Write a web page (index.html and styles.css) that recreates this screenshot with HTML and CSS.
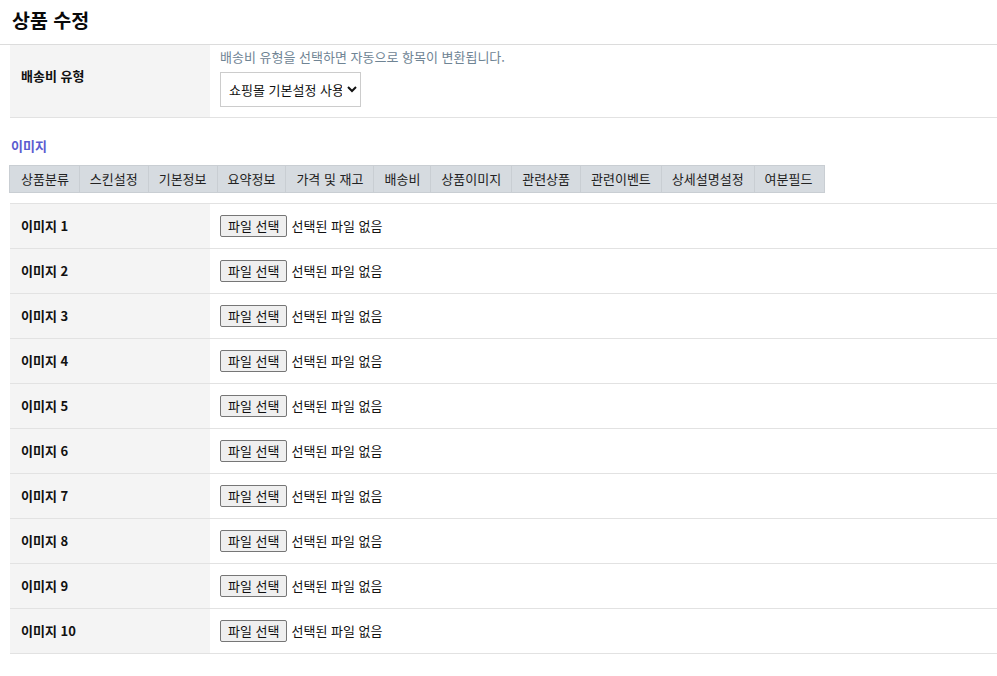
FILE: index.html
```html
<!DOCTYPE html>
<html lang="ko">
<head>
<meta charset="utf-8">
<title>상품 수정</title>
<link rel="stylesheet" href="styles.css">
</head>
<body>
<header class="page-header">
  <h1 class="page-title">상품 수정</h1>
</header>
<main class="content">
  <table class="form-table">
    <tr class="row-tall">
      <th class="label">배송비 유형</th>
      <td class="field">
        <p class="hint">배송비 유형을 선택하면 자동으로 항목이 변환됩니다.</p>
        <select class="select">
          <option>쇼핑몰 기본설정 사용</option>
        </select>
      </td>
    </tr>
  </table>

  <h2 class="section-title">이미지</h2>
  <nav class="tabs">
    <span class="tab">상품분류</span>
    <span class="tab">스킨설정</span>
    <span class="tab">기본정보</span>
    <span class="tab">요약정보</span>
    <span class="tab">가격 및 재고</span>
    <span class="tab">배송비</span>
    <span class="tab">상품이미지</span>
    <span class="tab">관련상품</span>
    <span class="tab">관련이벤트</span>
    <span class="tab">상세설명설정</span>
    <span class="tab">여분필드</span>
  </nav>

  <table class="form-table images">
    <tr><th class="label">이미지 1</th><td class="field"><span class="file"><button class="file-btn" type="button">파일 선택</button><span class="file-name">선택된 파일 없음</span></span></td></tr>
    <tr><th class="label">이미지 2</th><td class="field"><span class="file"><button class="file-btn" type="button">파일 선택</button><span class="file-name">선택된 파일 없음</span></span></td></tr>
    <tr><th class="label">이미지 3</th><td class="field"><span class="file"><button class="file-btn" type="button">파일 선택</button><span class="file-name">선택된 파일 없음</span></span></td></tr>
    <tr><th class="label">이미지 4</th><td class="field"><span class="file"><button class="file-btn" type="button">파일 선택</button><span class="file-name">선택된 파일 없음</span></span></td></tr>
    <tr><th class="label">이미지 5</th><td class="field"><span class="file"><button class="file-btn" type="button">파일 선택</button><span class="file-name">선택된 파일 없음</span></span></td></tr>
    <tr><th class="label">이미지 6</th><td class="field"><span class="file"><button class="file-btn" type="button">파일 선택</button><span class="file-name">선택된 파일 없음</span></span></td></tr>
    <tr><th class="label">이미지 7</th><td class="field"><span class="file"><button class="file-btn" type="button">파일 선택</button><span class="file-name">선택된 파일 없음</span></span></td></tr>
    <tr><th class="label">이미지 8</th><td class="field"><span class="file"><button class="file-btn" type="button">파일 선택</button><span class="file-name">선택된 파일 없음</span></span></td></tr>
    <tr><th class="label">이미지 9</th><td class="field"><span class="file"><button class="file-btn" type="button">파일 선택</button><span class="file-name">선택된 파일 없음</span></span></td></tr>
    <tr><th class="label">이미지 10</th><td class="field"><span class="file"><button class="file-btn" type="button">파일 선택</button><span class="file-name">선택된 파일 없음</span></span></td></tr>
  </table>
</main>
</body>
</html>
```

FILE: styles.css
```css
* { box-sizing: border-box; }

html, body {
  margin: 0;
  padding: 0;
  background: #fff;
  color: #111;
  font-family: "Noto Sans CJK KR", "Noto Sans", "Liberation Sans", sans-serif;
  font-size: 13px;
}

.page-header {
  height: 45px;
  border-bottom: 1px solid #dcdcdc;
  display: flex;
  align-items: center;
  padding: 0 12px 5px;
}

.page-title {
  margin: 0;
  font-size: 19.5px;
  font-weight: 700;
  line-height: 24px;
  color: #0a0a0a;
}

.content {
  padding-left: 10px;
}

.form-table {
  width: 100%;
  border-collapse: collapse;
}

.form-table tr {
  border-bottom: 1px solid #e2e2e2;
}

.form-table .label {
  width: 200px;
  background: #f4f4f4;
  text-align: left;
  font-weight: 700;
  padding: 0 0 0 11px;
  height: 45px;
  font-size: 13px;
  line-height: 18px;
  color: #111;
}

.form-table .field {
  padding: 0 0 0 10px;
  vertical-align: middle;
}

.row-tall .label {
  height: 72px;
  padding-bottom: 9px;
}
.row-tall .field {
  vertical-align: top;
  padding-top: 3px;
}

.hint {
  margin: 0 0 6px;
  color: #6f8494;
  line-height: 18px;
  font-size: 13px;
}

.select {
  height: 35px;
  width: 141px;
  border: 1px solid #cccccc;
  border-radius: 0;
  background: #fff;
  font-family: inherit;
  font-size: 13px;
  color: #111;
  padding: 0 2px 0 4px;
}

.section-title {
  margin: 18px 0 0 1px;
  font-size: 13px;
  line-height: 20px;
  font-weight: 700;
  color: #5b5bcf;
}

.tabs {
  display: flex;
  width: max-content;
  margin: 9px 0 0 -1px;
  border: 1px solid #c9ced3;
  background: #d6dbe0;
}

.tab {
  height: 26px;
  line-height: 26px;
  padding: 0 10px;
  border-left: 1px solid #c9ced3;
  font-size: 13px;
  color: #222;
  white-space: nowrap;
}

.tab:first-child { border-left: none; padding-left: 11px; }
.tab:last-child { padding-right: 12px; }

.images {
  margin-top: 10px;
  border-top: 1px solid #e2e2e2;
}

.file {
  display: inline-flex;
  align-items: center;
  gap: 4px;
}

.file-btn {
  height: 22px;
  padding: 0 7px;
  border: 1px solid #767676;
  border-radius: 2px;
  background: #efefef;
  font-family: inherit;
  font-size: 13px;
  color: #111;
  line-height: 20px;
}

.file-name {
  font-size: 13px;
  color: #111;
}
```
